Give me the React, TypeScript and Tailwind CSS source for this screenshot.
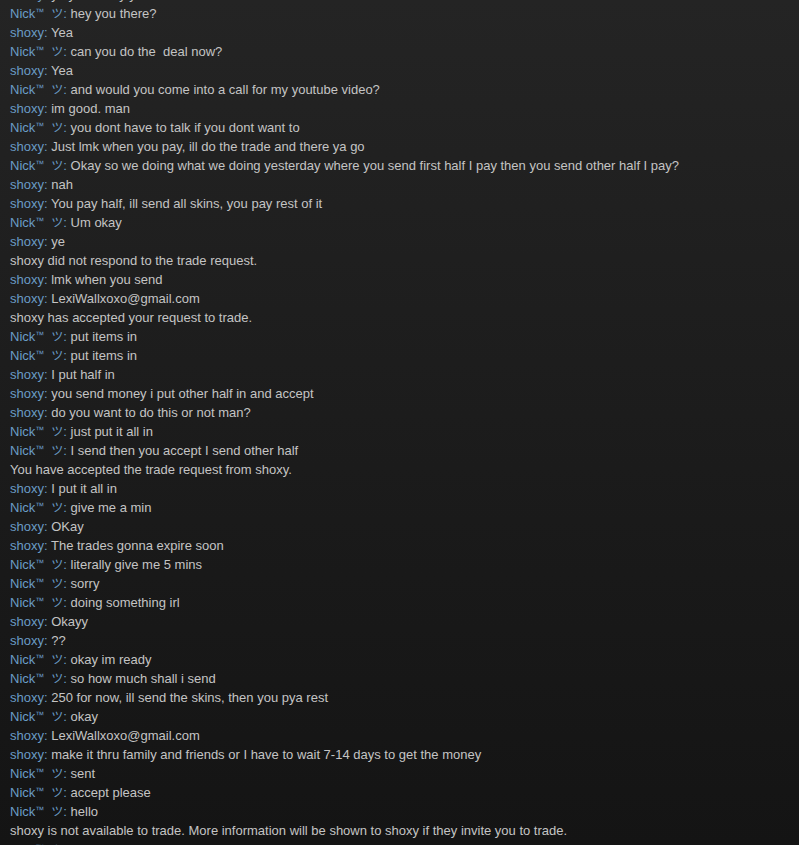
import React from "react";

type Line = { n?: "nick" | "shoxy"; t: string };

const lines: Line[] = [
  { n: "shoxy", t: "yo you ready yet" },
  { n: "nick", t: "hey you there?" },
  { n: "shoxy", t: "Yea" },
  { n: "nick", t: "can you do the\u00a0 deal now?" },
  { n: "shoxy", t: "Yea" },
  { n: "nick", t: "and would you come into a call for my youtube video?" },
  { n: "shoxy", t: "im good. man" },
  { n: "nick", t: "you dont have to talk if you dont want to" },
  { n: "shoxy", t: "Just lmk when you pay, ill do the trade and there ya go" },
  { n: "nick", t: "Okay so we doing what we doing yesterday where you send first half I pay then you send other half I pay?" },
  { n: "shoxy", t: "nah" },
  { n: "shoxy", t: "You pay half, ill send all skins, you pay rest of it" },
  { n: "nick", t: "Um okay" },
  { n: "shoxy", t: "ye" },
  { t: "shoxy did not respond to the trade request." },
  { n: "shoxy", t: "lmk when you send" },
  { n: "shoxy", t: "LexiWallxoxo@gmail.com" },
  { t: "shoxy has accepted your request to trade." },
  { n: "nick", t: "put items in" },
  { n: "nick", t: "put items in" },
  { n: "shoxy", t: "I put half in" },
  { n: "shoxy", t: "you send money i put other half in and accept" },
  { n: "shoxy", t: "do you want to do this or not man?" },
  { n: "nick", t: "just put it all in" },
  { n: "nick", t: "I send then you accept I send other half" },
  { t: "You have accepted the trade request from shoxy." },
  { n: "shoxy", t: "I put it all in" },
  { n: "nick", t: "give me a min" },
  { n: "shoxy", t: "OKay" },
  { n: "shoxy", t: "The trades gonna expire soon" },
  { n: "nick", t: "literally give me 5 mins" },
  { n: "nick", t: "sorry" },
  { n: "nick", t: "doing something irl" },
  { n: "shoxy", t: "Okayy" },
  { n: "shoxy", t: "??" },
  { n: "nick", t: "okay im ready" },
  { n: "nick", t: "so how much shall i send" },
  { n: "shoxy", t: "250 for now, ill send the skins, then you pya rest" },
  { n: "nick", t: "okay" },
  { n: "shoxy", t: "LexiWallxoxo@gmail.com" },
  { n: "shoxy", t: "make it thru family and friends or I have to wait 7-14 days to get the money" },
  { n: "nick", t: "sent" },
  { n: "nick", t: "accept please" },
  { n: "nick", t: "hello" },
  { t: "shoxy is not available to trade. More information will be shown to shoxy if they invite you to trade." },
  { n: "nick", t: "hello?" },
];

function Name({ n }: { n: "nick" | "shoxy" }) {
  if (n === "nick") {
    return (
      <span className="text-[#6a9cc6]">
        Nick<span className="text-[9px] leading-none align-[3px]">™</span>
        <span
          className="ml-[7px] text-[12px] leading-none"
          style={{ fontFamily: '"Noto Sans CJK JP", sans-serif' }}
        >
          ツ
        </span>
      </span>
    );
  }
  return <span className="text-[#6a9cc6]">shoxy</span>;
}

export default function App() {
  return (
    <div
      className="h-[845px] w-[799px] overflow-hidden bg-gradient-to-b from-[#242424] to-[#141414] text-[13px] leading-[19px] text-[#c4c4c4]"
      style={{ fontFamily: '"Liberation Sans", Arial, sans-serif' }}
    >
      <div className="-mt-[15px] flex flex-col pl-[10px]">
        {lines.map((l, i) => (
          <div key={i} className="h-[19px] whitespace-nowrap">
            {l.n ? (
              <>
                <Name n={l.n} />
                <span className="text-[#6a9cc6]">:</span> {l.t}
              </>
            ) : (
              l.t
            )}
          </div>
        ))}
      </div>
    </div>
  );
}
